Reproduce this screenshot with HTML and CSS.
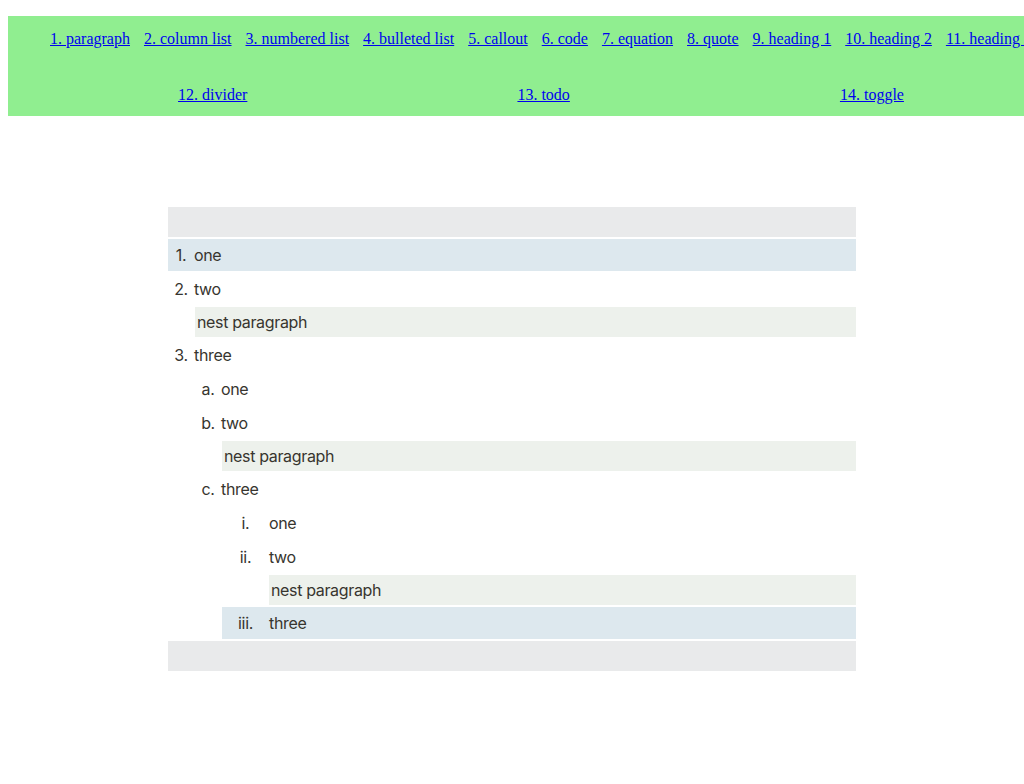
FILE: index.html
```html
<!DOCTYPE html>
<html lang="en">
<head>
<meta charset="utf-8">
<title>Numbered list</title>
<link rel="stylesheet" href="styles.css">
</head>
<body>
<nav class="toc">
  <ul class="toc-list">
    <li><a href="#">1. paragraph</a></li>
    <li><a href="#">2. column list</a></li>
    <li><a href="#">3. numbered list</a></li>
    <li><a href="#">4. bulleted list</a></li>
    <li><a href="#">5. callout</a></li>
    <li><a href="#">6. code</a></li>
    <li><a href="#">7. equation</a></li>
    <li><a href="#">8. quote</a></li>
    <li><a href="#">9. heading 1</a></li>
    <li><a href="#">10. heading 2</a></li>
    <li><a href="#">11. heading 3</a></li>
    <li><a href="#">12. divider</a></li>
    <li><a href="#">13. todo</a></li>
    <li><a href="#">14. toggle</a></li>
  </ul>
</nav>
<main class="page">
  <div class="block empty bg-gray"></div>
  <ol class="list">
    <li class="item">
      <div class="row bg-blue"><span class="marker">1.</span><span class="text">one</span></div>
    </li>
    <li class="item">
      <div class="row"><span class="marker">2.</span><span class="text">two</span></div>
      <div class="children">
        <p class="para bg-green">nest paragraph</p>
      </div>
    </li>
    <li class="item">
      <div class="row"><span class="marker">3.</span><span class="text">three</span></div>
      <div class="children">
        <ol class="list">
          <li class="item">
            <div class="row"><span class="marker">a.</span><span class="text">one</span></div>
          </li>
          <li class="item">
            <div class="row"><span class="marker">b.</span><span class="text">two</span></div>
            <div class="children">
              <p class="para bg-green">nest paragraph</p>
            </div>
          </li>
          <li class="item">
            <div class="row"><span class="marker">c.</span><span class="text">three</span></div>
            <div class="children">
              <ol class="list roman">
                <li class="item">
                  <div class="row"><span class="marker">i.</span><span class="text">one</span></div>
                </li>
                <li class="item">
                  <div class="row"><span class="marker">ii.</span><span class="text">two</span></div>
                  <div class="children wide">
                    <p class="para bg-green">nest paragraph</p>
                  </div>
                </li>
                <li class="item">
                  <div class="row bg-blue"><span class="marker">iii.</span><span class="text">three</span></div>
                </li>
              </ol>
            </div>
          </li>
        </ol>
      </div>
    </li>
  </ol>
  <div class="block empty bg-gray"></div>
</main>
</body>
</html>
```

FILE: styles.css
```css
html {
  margin: 0;
  padding: 0;
}

body {
  margin: 0;
  padding: 16px 8px 8px;
  background: #ffffff;
}

.toc {
  margin: 0;
}

.toc-list {
  list-style: none;
  margin: 0;
  box-sizing: content-box;
  width: 996px;
  padding: 14px 17px 12px 35px;
  background: #90ee90;
  display: flex;
  flex-wrap: wrap;
  justify-content: space-around;
  row-gap: 38px;
  font-family: "Liberation Serif", "Times New Roman", serif;
  font-size: 16px;
  line-height: 18px;
}

.toc-list li {
  margin: 0 7px;
}

.toc-list a {
  color: #0000ee;
  text-decoration: underline;
}

.page {
  width: 688px;
  margin: 91px auto 0;
  display: flex;
  flex-direction: column;
  gap: 2px;
  font-family: Inter, "Noto Sans", sans-serif;
  font-size: 16px;
  letter-spacing: -0.35px;
  color: #37352f;
}

.block.empty {
  height: 30px;
}

.bg-gray { background: #e9eaeb; }
.bg-blue { background: #dde8ee; }
.bg-green { background: #edf1ec; }

.list {
  list-style: none;
  margin: 0;
  padding: 0;
  display: flex;
  flex-direction: column;
  gap: 2px;
}

.item {
  display: flex;
  flex-direction: column;
  gap: 2px;
}

.row {
  display: flex;
  align-items: center;
  height: 32px;
  line-height: 24px;
}

.marker {
  width: 26px;
  flex: none;
  text-align: center;
}

.roman > .item > .row > .marker {
  width: 47px;
}

.children {
  margin-left: 27px;
}

.children.wide {
  margin-left: 47px;
}

.para {
  margin: 0;
  padding: 3px 2px;
  line-height: 24px;
}
```
